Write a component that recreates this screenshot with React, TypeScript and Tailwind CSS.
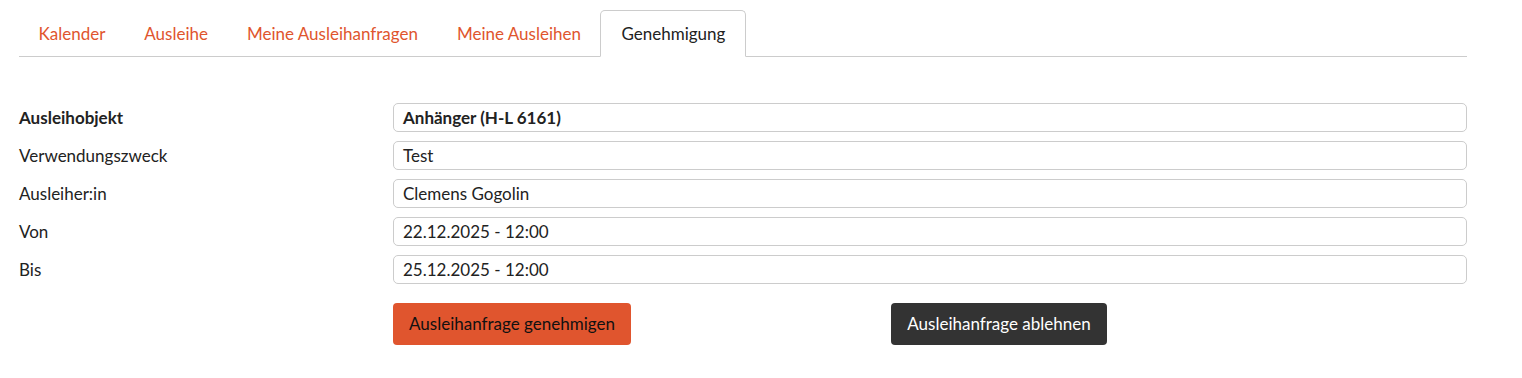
import React from "react";

const tabs = ["Kalender", "Ausleihe", "Meine Ausleihanfragen", "Meine Ausleihen", "Genehmigung"];

const rows = [
  { label: "Ausleihobjekt", value: "Anhänger (H-L 6161)", bold: true },
  { label: "Verwendungszweck", value: "Test" },
  { label: "Ausleiher:in", value: "Clemens Gogolin" },
  { label: "Von", value: "22.12.2025 - 12:00" },
  { label: "Bis", value: "25.12.2025 - 12:00" },
];

export default function App() {
  return (
    <div className="w-[1522px] h-[378px] bg-white font-['Lato',sans-serif] text-[17px] text-[#222] pt-[10px] pl-[19px] pr-[55px]">
      <ul className="flex border-b border-[#ccc] h-[47px]">
        {tabs.map((t, i) =>
          i === tabs.length - 1 ? (
            <li
              key={t}
              className="px-[20px] h-[47px] -mb-px flex items-center border border-[#ccc] border-b-white rounded-t-[5px] bg-white text-[#222]"
            >
              {t}
            </li>
          ) : (
            <li key={t} className="px-[19.5px] h-[47px] flex items-center text-[#e0552e]">
              {t}
            </li>
          )
        )}
      </ul>

      <div className="mt-[46px] flex flex-col gap-[9px]">
        {rows.map((r) => (
          <div key={r.label} className="grid grid-cols-[374px_1fr] items-center">
            <span className={r.bold ? "font-bold" : ""}>{r.label}</span>
            <div
              className={`h-[29px] border border-[#ccc] rounded-[5px] px-[9px] flex items-center ${
                r.bold ? "font-bold" : ""
              }`}
            >
              {r.value}
            </div>
          </div>
        ))}
      </div>

      <div className="mt-[19px] pl-[374px] flex">
        <button className="h-[42px] w-[238px] rounded-[4px] bg-[#e0552e] text-[#111]">
          Ausleihanfrage genehmigen
        </button>
        <button className="ml-[260px] h-[42px] w-[216px] rounded-[4px] bg-[#333] text-white">
          Ausleihanfrage ablehnen
        </button>
      </div>
    </div>
  );
}
